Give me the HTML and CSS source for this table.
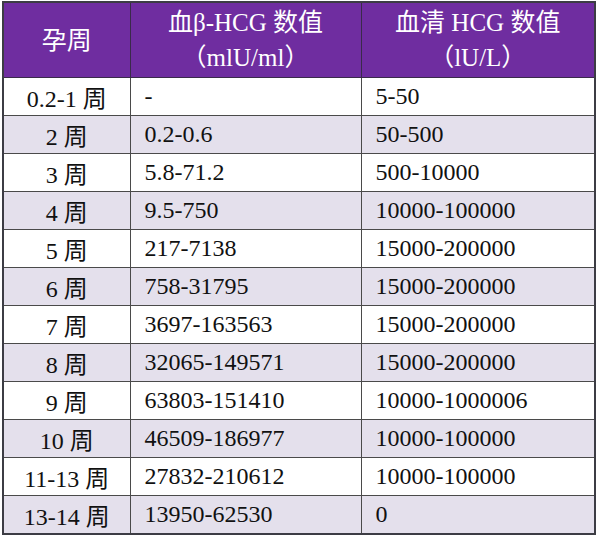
FILE: index.html
```html
<!DOCTYPE html>
<html>
<head>
<meta charset="utf-8">
<link rel="stylesheet" href="styles.css">
</head>
<body>
<table class="hcg">
  <colgroup>
    <col class="c1"><col class="c2"><col class="c3">
  </colgroup>
  <thead>
    <tr>
      <th>孕周</th>
      <th>血β-HCG 数值<br>（mlU/ml）</th>
      <th>血清 HCG 数值<br>（lU/L）</th>
    </tr>
  </thead>
  <tbody>
    <tr><td class="wk">0.2-1 周</td><td>-</td><td>5-50</td></tr>
    <tr><td class="wk">2 周</td><td>0.2-0.6</td><td>50-500</td></tr>
    <tr><td class="wk">3 周</td><td>5.8-71.2</td><td>500-10000</td></tr>
    <tr><td class="wk">4 周</td><td>9.5-750</td><td>10000-100000</td></tr>
    <tr><td class="wk">5 周</td><td>217-7138</td><td>15000-200000</td></tr>
    <tr><td class="wk">6 周</td><td>758-31795</td><td>15000-200000</td></tr>
    <tr><td class="wk">7 周</td><td>3697-163563</td><td>15000-200000</td></tr>
    <tr><td class="wk">8 周</td><td>32065-149571</td><td>15000-200000</td></tr>
    <tr><td class="wk">9 周</td><td>63803-151410</td><td>10000-1000006</td></tr>
    <tr><td class="wk">10 周</td><td>46509-186977</td><td>10000-100000</td></tr>
    <tr><td class="wk">11-13 周</td><td>27832-210612</td><td>10000-100000</td></tr>
    <tr><td class="wk">13-14 周</td><td>13950-62530</td><td>0</td></tr>
  </tbody>
</table>
</body>
</html>
```

FILE: styles.css
```css
html, body {
  margin: 0;
  padding: 0;
  background: #ffffff;
}
body {
  padding: 1px 0 0 2px;
  font-family: "Liberation Serif", "Noto Sans CJK SC", serif;
  color: #111111;
}
.hcg {
  border-collapse: collapse;
  table-layout: fixed;
  width: 592px;
  border: 2px solid #3c3c44;
}
.c1 { width: 127px; }
.c2 { width: 231px; }
.c3 { width: 234px; }
.hcg th {
  font-family: "Liberation Serif", "Noto Sans CJK SC", serif;
  background: #6f2da0;
  color: #ffffff;
  font-weight: normal;
  font-size: 25px;
  line-height: 35px;
  height: 74px;
  padding: 0;
  text-align: center;
  vertical-align: middle;
  border: 1px solid #3a2a4a;
}
.hcg td {
  font-family: "Liberation Serif", "Noto Sans CJK SC", serif;
  font-size: 24px;
  height: 37px;
  padding: 0 0 0 14px;
  text-align: left;
  vertical-align: middle;
  border: 1px solid #4a4a4a;
  white-space: nowrap;
}
.hcg td.wk {
  text-align: center;
  padding: 0;
}
.hcg tbody tr:nth-child(even) td {
  background: #e4e0ec;
}
```
